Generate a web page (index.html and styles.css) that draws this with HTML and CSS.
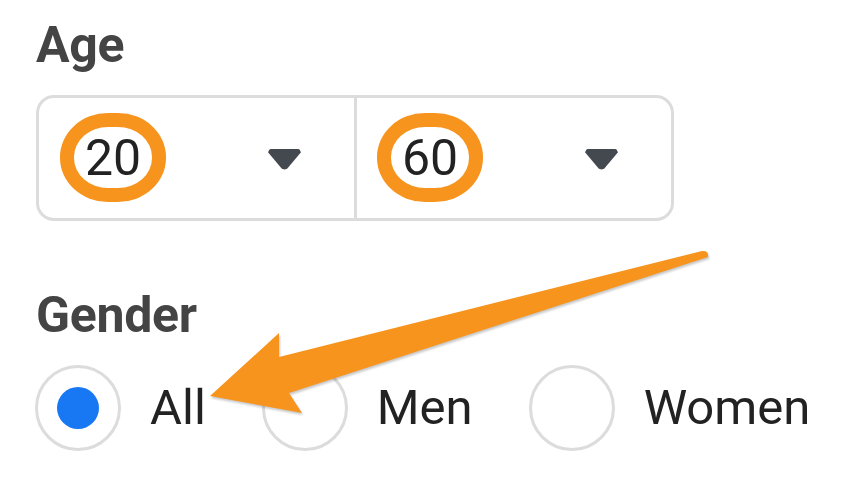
FILE: index.html
```html
<!DOCTYPE html>
<html lang="en">
<head>
  <meta charset="UTF-8" />
  <title>Audience filters</title>
  <link rel="stylesheet" href="styles.css">
</head>
<body>
  <div class="panel">
    <h2 class="label">Age</h2>
    <div class="age-range">
      <div class="age-select">
        <span class="mark">20</span>
        <span class="caret"></span>
      </div>
      <div class="age-select">
        <span class="mark">60</span>
        <span class="caret"></span>
      </div>
    </div>

    <h2 class="label gender">Gender</h2>
    <div class="radios">
      <label class="radio checked"><span class="dot"></span>All</label>
      <label class="radio"><span class="dot"></span>Men</label>
      <label class="radio"><span class="dot"></span>Women</label>
    </div>
  </div>

  <svg class="arrow" width="846" height="494" viewBox="0 0 846 494">
    <path d="M210 396 L279 333 L279 357 L702 251 Q709 250 708 257 L289 393 L302 413 Z" fill="#f7941d" />
  </svg>
</body>
</html>
```

FILE: styles.css
```css
body {
  margin: 0;
  background: #fff;
  font-family: Roboto, 'Liberation Sans', sans-serif;
  color: #1c1e21;
}

.panel {
  padding: 15px 0 0 35px;
}

.label {
  margin: 0;
  font-size: 50px;
  line-height: 60px;
  font-weight: bold;
  color: #444;
  padding-left: 1px;
  letter-spacing: -0.3px;
}

.label.gender {
  margin-top: 64px;
}

.age-range {
  display: flex;
  width: 632px;
  height: 120px;
  margin-top: 20px;
  margin-left: 1px;
  border: 3px solid #dcdcdc;
  border-radius: 18px;
}

.age-select {
  flex: 1;
  display: flex;
  align-items: center;
  justify-content: space-between;
  padding: 0 53px 0 21px;
}

.age-select + .age-select {
  border-left: 3px solid #dcdcdc;
  padding-left: 20px;
}

.mark {
  display: flex;
  align-items: center;
  justify-content: center;
  width: 78px;
  height: 61px;
  border: 14px solid #f7941d;
  border-radius: 48px / 44px;
  font-size: 50px;
  line-height: 1;
  color: #222;
  margin-top: -1px;
}

.caret {
  width: 33px;
  height: 21px;
  margin-top: 2px;
  background: #444950;
  clip-path: polygon(6% 0, 94% 0, 100% 18%, 58% 96%, 50% 100%, 42% 96%, 0 18%);
  border-radius: 3px;
}

.radios {
  display: flex;
  align-items: center;
  gap: 56px;
  margin-top: 20px;
}

.radio {
  display: flex;
  align-items: center;
  gap: 29px;
  font-size: 49px;
  line-height: 60px;
  color: #222;
}

.radio .dot {
  width: 80px;
  height: 80px;
  border: 3px solid #dcdcdc;
  border-radius: 50%;
  display: flex;
  align-items: center;
  justify-content: center;
}

.radio.checked .dot::after {
  content: '';
  width: 42px;
  height: 42px;
  border-radius: 50%;
  background: #1877f2;
}

.arrow {
  position: absolute;
  left: 0;
  top: 0;
  filter: drop-shadow(1px 2px 1px rgba(0, 0, 0, 0.22));
}
```
